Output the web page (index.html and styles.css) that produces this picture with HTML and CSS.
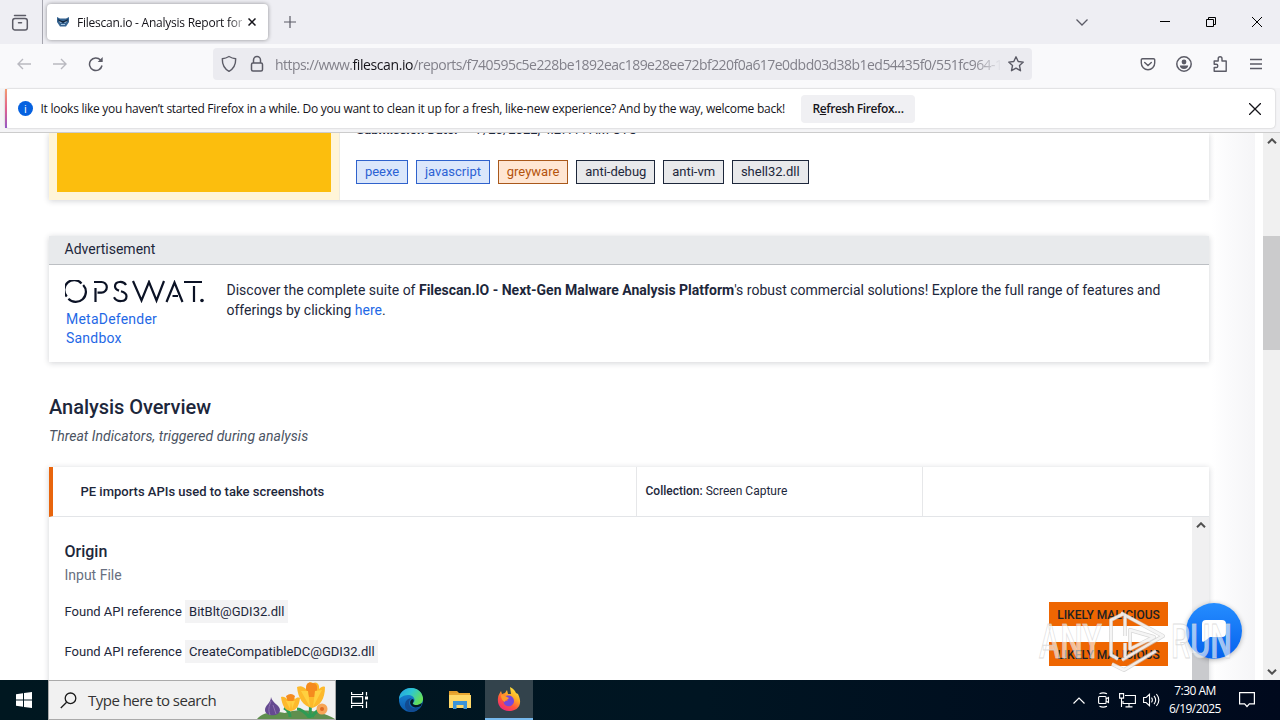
FILE: index.html
```html
<!DOCTYPE html>
<html lang="en">
<head>
<meta charset="utf-8">
<title>Filescan.io - Analysis Report</title>
<link rel="stylesheet" href="styles.css">
</head>
<body>
<div class="screen">
  <header class="tabs">
    <div class="view"><svg width="18" height="18" viewBox="0 0 18 18" fill="none" stroke="#5b5b66" stroke-width="1.500" stroke-linecap="round"><path d="M3.500 1.600h11"/><rect x="1.700" y="4.500" width="14.600" height="11.500" rx="2.300"/><path d="M7.500 8.800h3"/></svg></div>
    <div class="tab">
      <svg width="12" height="10" viewBox="0 0 12 10"><path d="M0 0l3 1.500h6L12 0v5L9 9.500H3L0 5z" fill="#356391"/><path d="M1 2l4 2h2l4-2-1 3H7L6 6.500 5 5H2z" fill="#10263f"/><path d="M2 4l3 1.500H3zm8 0L7 5.500h2z" fill="#dce9f5"/><path d="M4 7.500h4" stroke="#a5c4df"/></svg>
      <span class="tab-title">Filescan.io - Analysis Report for</span>
      <svg class="tab-x" width="8" height="8" viewBox="0 0 8 8" stroke="#15141a" stroke-width="1.500"><path d="M.5.5l7 7m0-7l-7 7"/></svg>
    </div>
    <svg class="plus" width="12" height="12" viewBox="0 0 12 12" stroke="#5b5b66" stroke-width="1.200"><path d="M6 0v12M0 6h12"/></svg>
    <svg class="all-tabs" width="12" height="7" viewBox="0 0 12 7" fill="none" stroke="#5b5b66" stroke-width="1.300"><path d="M.5.5L6 6 11.500.5"/></svg>
    <div class="win">
      <svg width="10" height="10" viewBox="0 0 10 10" stroke="#000"><path d="M0 4.500h10"/></svg>
      <svg width="10" height="10" viewBox="0 0 10 10" stroke="#000" fill="none"><path d="M.5 2.500h7v7h-7zM2.500 2.500v-2h7v7h-2"/></svg>
      <svg width="10" height="10" viewBox="0 0 10 10" stroke="#000" fill="none"><path d="M0 0l10 10M10 0L0 10"/></svg>
    </div>
  </header>

  <div class="toolbar">
    <div class="nav">
      <svg width="14" height="12" viewBox="0 0 14 12" fill="none" stroke="#b9b9c0" stroke-width="1.400"><path d="M14 6H1M6 1L1 6l5 5"/></svg>
      <svg width="14" height="12" viewBox="0 0 14 12" fill="none" stroke="#b9b9c0" stroke-width="1.400"><path d="M0 6h13M8 1l5 5-5 5"/></svg>
      <svg width="16" height="16" viewBox="0 0 16 16" fill="none" stroke="#5b5b66" stroke-width="1.500"><path d="M14 9.500A6.300 6.300 0 1 1 12.500 4"/><path d="M14.700 1v5h-5z" fill="#5b5b66" stroke="none"/></svg>
    </div>
    <div class="urlbar">
      <svg width="16" height="18" viewBox="0 0 16 18" fill="none" stroke="#5b5b66" stroke-width="1.400" stroke-linejoin="round"><path d="M8 1.500C6 2.700 3.700 3.500 1.300 3.700 1.200 9 3 13.500 8 16.300c5-2.800 6.800-7.300 6.700-12.600C12.300 3.500 10 2.700 8 1.500z"/></svg>
      <svg width="14" height="18" viewBox="0 0 14 18" fill="none" stroke="#5b5b66" stroke-width="1.500"><rect x="1.500" y="8" width="11" height="8" rx="1.500"/><path d="M3.500 8V5a3.500 3.500 0 0 1 7 0v3"/></svg>
      <div class="url">https://www.<b>filescan.io</b>/reports/f740595c5e228be1892eac189e28ee72bf220f0a617e0dbd03d38b1ed54435f0/551fc964-1</div>
      <svg width="18" height="18" viewBox="0 0 18 18" fill="none" stroke="#5b5b66" stroke-width="1.400" stroke-linejoin="round"><path d="M9 1.800l2.200 4.700 5.100.6-3.800 3.500 1 5.100L9 13.200l-4.500 2.500 1-5.100L1.700 7.100l5.100-.6z"/></svg>
    </div>
    <div class="tools">
      <svg width="16" height="16" viewBox="0 0 16 16" fill="none" stroke="#5b5b66" stroke-width="1.400" stroke-linecap="round"><path d="M2.500 2.700h11a1.200 1.200 0 0 1 1.200 1.200V7a6.700 6.700 0 0 1-13.400 0V3.900a1.200 1.200 0 0 1 1.200-1.200z"/><path d="M4.700 6.500L8 9.500l3.300-3"/></svg>
      <svg width="16" height="16" viewBox="0 0 16 16"><circle cx="8" cy="8" r="7.200" fill="none" stroke="#5b5b66" stroke-width="1.500"/><circle cx="8" cy="6" r="2.400" fill="#5b5b66"/><path d="M3.800 9.500h8.400c0 2-1.700 3.400-4.200 3.400s-4.200-1.400-4.200-3.400z" fill="#5b5b66"/></svg>
      <svg width="16" height="16" viewBox="0 0 16 16" fill="none" stroke="#5b5b66" stroke-width="1.400" stroke-linejoin="round"><path d="M2.200 15.300v-3.800h2a1.600 1.600 0 0 0 0-3.200h-2V5h4V2.700a1.900 1.900 0 0 1 3.800 0V5h4.200v10.300z"/></svg>
      <svg width="12" height="12" viewBox="0 0 12 12" stroke="#5b5b66" stroke-width="1.300"><path d="M0 1.500h12M0 6h12M0 10.500h12"/></svg>
    </div>
  </div>

  <div class="notice-wrap">
    <div class="notice">
      <span class="info">i</span>
      <span class="notice-text">It looks like you haven’t started Firefox in a while. Do you want to clean it up for a fresh, like-new experience? And by the way, welcome back!</span>
      <button class="refresh">R<u>e</u>fresh Firefox…</button>
      <svg class="notice-x" width="12" height="12" viewBox="0 0 12 12" stroke="#15141a" stroke-width="1.300"><path d="M0 0l12 12M12 0L0 12"/></svg>
    </div>
  </div>

  <div class="viewport">
    <div class="edge"></div>
    <main class="page">
      <section class="card summary">
        <div class="verdict"><div class="verdict-fill"></div></div>
        <div class="details">
          <div class="date"><b>Submission Date:</b><span>7/20/2022, 4:27:44 AM UTC</span></div>
          <div class="tags">
            <span class="tag blue">peexe</span><span class="tag blue">javascript</span><span class="tag orange">greyware</span><span class="tag">anti-debug</span><span class="tag">anti-vm</span><span class="tag">shell32.dll</span>
          </div>
        </div>
      </section>

      <section class="card ad">
        <div class="ad-head">Advertisement</div>
        <div class="ad-body">
          <div class="brand">
            <svg width="140" height="24" viewBox="0 0 140 24" fill="none" stroke="#0b1225" stroke-width="2.200"><path d="M1.800 16.500A9.700 9.700 0 0 1 16.500 3.400M18.200 4.900A9.700 9.700 0 0 1 3.400 18.700"/><path d="M30.500 22V8M29 2h7.500a5.300 5.300 0 0 1 0 10.600h-4"/><path d="M61 5c-2.500-4.500-11-4-11 1.300 0 2.300 1.500 3.500 4 4.300M56 11.200c3.500 1 5.500 2.500 5.500 5 0 6-9.500 6.500-12.500 1"/><path d="M68 1l8.500 19.500L84 2l7.500 18.500L99 1"/><path d="M101.500 22l8-19.500 8 19.500M107.500 16h5.500"/><path d="M119 2h18M129 6v16"/><circle cx="137" cy="20.500" r="1.800" fill="#0b1225" stroke="none"/></svg>
            <a class="product">MetaDefender<br>Sandbox</a>
          </div>
          <p class="ad-text">Discover the complete suite of <b>Filescan.IO - Next-Gen Malware Analysis Platform</b>'s robust commercial solutions! Explore the full range of features and<br>offerings by clicking <a>here</a>.</p>
        </div>
      </section>

      <h2>Analysis Overview</h2>
      <p class="subtitle">Threat Indicators, triggered during analysis</p>

      <section class="card indicator">
        <div class="ind-row">
          <div class="ind-name">PE imports APIs used to take screenshots</div>
          <div class="ind-col"><b>Collection:</b> Screen Capture</div>
          <div class="ind-empty"></div>
        </div>
        <div class="ind-body">
          <div class="ind-content">
            <h3>Origin</h3>
            <p class="source">Input File</p>
            <div class="finding"><span>Found API reference <code>BitBlt@GDI32.dll</code></span><strong>LIKELY MALICIOUS</strong></div>
            <div class="finding"><span>Found API reference <code>CreateCompatibleDC@GDI32.dll</code></span><strong>LIKELY MALICIOUS</strong></div>
          </div>
          <div class="inner-scroll">
            <svg width="10" height="6" viewBox="0 0 10 6" fill="none" stroke="#505050" stroke-width="2"><path d="M1 5.300l4-4 4 4"/></svg>
            <div class="inner-thumb"></div>
          </div>
        </div>
      </section>
    </main>
    <div class="scrollbar">
      <svg width="10" height="6" viewBox="0 0 10 6" fill="none" stroke="#505050" stroke-width="2"><path d="M1 5.300l4-4 4 4"/></svg>
      <div class="thumb"></div>
      <svg class="down" width="10" height="6" viewBox="0 0 10 6" fill="none" stroke="#505050" stroke-width="2"><path d="M1 .7l4 4 4-4"/></svg>
    </div>
    <div class="chat"><svg width="24" height="24" viewBox="0 0 24 24" fill="#fff"><path d="M4 1h16a4 4 0 0 1 4 4v9a4 4 0 0 1-4 4H8l-6 4.500c-1 .7-2 .3-2-1V5a4 4 0 0 1 4-4z"/></svg></div>
    <svg class="watermark" width="200" height="70" viewBox="0 0 200 70">
      <g fill="#fff" fill-opacity=".62" stroke="#cfcfcf" stroke-opacity=".7" stroke-width=".9" font-family="Roboto, sans-serif" font-size="49" font-weight="500">
        <text x="2" y="49" textLength="63" lengthAdjust="spacingAndGlyphs">ANY</text>
        <text x="134" y="49" textLength="61" lengthAdjust="spacingAndGlyphs">RUN</text>
      </g>
      <g fill="none" stroke-linejoin="round">
        <path d="M86 5l-12 6v35l7 4M88 7v20M88 34v14M84 4l42 23-41 24M93 21v19l24-12zM75 55l12 6 32-19" stroke="#c8c8c8" stroke-opacity=".7" stroke-width="4"/>
        <path d="M86 5l-12 6v35l7 4M88 7v20M88 34v14M84 4l42 23-41 24M93 21v19l24-12zM75 55l12 6 32-19" stroke="#fff" stroke-opacity=".75" stroke-width="2.600"/>
      </g>
    </svg>
  </div>

  <footer class="taskbar">
    <div class="start"><svg width="16" height="16" viewBox="0 0 16 16" fill="#fff"><path d="M0 2.200L7 1.200v6.300H0zM8 1.100L16 0v7.500H8zM0 8.500h7v6.300L0 13.800zM8 8.500h8V16l-8-1.100z"/></svg></div>
    <div class="search">
      <svg width="17" height="17" viewBox="0 0 17 17" fill="none" stroke="#1b1b1b" stroke-width="1.300"><circle cx="10.500" cy="6.300" r="5.300"/><path d="M6.600 10.200L.8 16"/></svg>
      <span>Type here to search</span>
      <svg class="flowers" width="78" height="38" viewBox="0 0 78 38">
        <path d="M0 38c6-7 18-8 28-6 12-5 36-3 50 6z" fill="#5f8f4e"/>
        <path d="M33 36c0-5-2-7-6-9M53 37c0-7 1-9 0-14M52 36c-5-6-8-8-12-8M55 36c3-6 8-8 13-9" stroke="#2e9b54" stroke-width="3" fill="none"/>
        <path d="M14 16c1 6 9 8 9 13 0 7-15 7-15 0 0-5 6-7 6-13z" fill="#654a91"/><path d="M14 20c-2 5-3 9-1 14M16 24l3 9" stroke="#9173b2" fill="none"/>
        <path d="M24 16c3-1 5 1 6 2 2-4 6-4 8 0 1-1 3-2 5-1-1 8-3 12-9 13-6 0-9-6-10-14z" fill="#fdb92b"/><path d="M29 15q5-4 9 0l-2 6h-5z" fill="#f58a1e"/><path d="M29 20l4 8 1-8 1 8 3-8" fill="#ffd040"/>
        <path d="M40 6c4-2 7 0 9 2 0-6 4-8 7-6 4-2 7 2 6 6 2-2 4-3 6-2 0 12-5 19-13 21-9-2-14-10-15-21z" fill="#fdb92b"/><path d="M49 8q0-8 6-6 6-1 5 7l-2 7h-6z" fill="#f58a1e"/><path d="M44 10l9 16-2-16zM65 9l-9 17 2-16z" fill="#ffd040"/>
        <circle cx="65" cy="28" r="5.500" fill="#f6a557"/><circle cx="65" cy="28" r="2" fill="#df6a22"/>
      </svg>
    </div>
    <div class="app"><svg width="18" height="16" viewBox="0 0 18 16" fill="none" stroke="#fff" stroke-width="1.200"><path d="M.6 0v2.500h11V0M.6 16v-2.500h11V16M.6 4.600h11v6.800H.6zM15.500 0v3.500M15.500 9.500V16"/><path d="M14 4.500h3v3h-3z" fill="#fff" stroke="none"/></svg></div>
    <div class="app wide"><svg width="24" height="24" viewBox="0 0 24 24"><defs><linearGradient id="eg" x1="0" y1="0" x2="1" y2=".5"><stop offset="0" stop-color="#249de2"/><stop offset=".5" stop-color="#2dc6d2"/><stop offset="1" stop-color="#65df58"/></linearGradient><linearGradient id="eb" x1="0" y1="0" x2="0" y2="1"><stop offset="0" stop-color="#1b8edc"/><stop offset="1" stop-color="#0b58ac"/></linearGradient></defs><circle cx="12" cy="12" r="12" fill="url(#eb)"/><path d="M0 11C1-3 22-4 24 10c.4 5-3 7-7 7-3 0-4-1-2-3 2-4-2-7-6-7-5 0-8 3-9 4z" fill="url(#eg)"/><path d="M13 10c-3 1-5 8 1 10 4 1 6-1 8-2-2 3-6 6-10 6-6-1-8-8-4-12 1-1 3-2 5-2z" fill="#124b91"/><path d="M14 11c2 2-1 4 0 5 2 2 6 1 9-1l-1 3c-4 2-8 2-10-1-2-3 0-6 2-6z" fill="#051a24"/></svg></div>
    <div class="app folder"><svg width="22" height="18" viewBox="0 0 22 18"><path d="M0 0h8l2 2h11v15H0z" fill="#e9a832"/><path d="M0 4h22v13H0z" fill="#ffd868"/><path d="M4 10h14v8h-3.500v-4h-7v4H4z" fill="#3b94d8"/><path d="M0 1h8" stroke="#d98e20"/></svg></div>
    <div class="app active"><svg width="24" height="24" viewBox="0 0 24 24"><defs><linearGradient id="fx" x1=".8" y1="0" x2=".2" y2="1"><stop offset="0" stop-color="#fff044"/><stop offset=".35" stop-color="#ffae24"/><stop offset=".65" stop-color="#ff563b"/><stop offset="1" stop-color="#ef2183"/></linearGradient></defs><path d="M4 4l1 3 3-1 2-3 1 4 3 0-1-7c4 2 5 4 6 6l2 1c6 12-2 17-9 17C4 24 0 18 1 11c0-3 2-5 3-7z" fill="url(#fx)"/><path d="M8 10c3-3 9-1 9 4 0 4-4 6-7 5-3-1-4-4-3-6 1 2 3 1 4 0z" fill="#7548db"/><path d="M4 8c4 0 5 2 8 3-1 2-4 1-4 4-3-1-4-4-4-7z" fill="#ff9b2c"/></svg></div>
    <div class="tray">
      <svg width="12" height="7" viewBox="0 0 12 7" fill="none" stroke="#fff" stroke-width="1.200"><path d="M.5 6.500L6 1l5.500 5.500"/></svg>
      <svg class="cam" width="12" height="16" viewBox="0 0 12 16" fill="none" stroke="#fff" stroke-width="1.100"><rect x=".6" y="4.500" width="7.500" height="7" rx="1"/><path d="M8 7l2.500-1.500v5L8 9M1.500 1.700Q5 0 9 1.700M1.500 14.300Q5 16 9 14.300"/></svg>
      <svg class="net" width="17" height="15" viewBox="0 0 17 15" fill="none" stroke="#fff" stroke-width="1.100"><path d="M6 2.500h10.400v8H4V8M10 10.500v3M6.500 13.900h7M.6.600h4v4.500h-4zM2.500 5v9"/></svg>
      <svg class="vol" width="17" height="14" viewBox="0 0 17 14" fill="none" stroke="#fff" stroke-width="1.100"><path d="M.6 4.500h2.500L6.500 1.300v11.400L3.100 9.500H.6zM8.500 4.700q1.700 2.300 0 4.600M11 2.800q3.300 4.200 0 8.400M13.400 1q4.900 6 0 12"/></svg>
      <div class="clock"><span class="time">7:30 AM</span><span class="day">6/19/2025</span></div>
      <svg class="note" width="16" height="16" viewBox="0 0 16 16" fill="none" stroke="#fff" stroke-width="1.200"><path d="M.6.600h14.800v11.300h-5L8 14.500l-2.400-2.600h-5z"/></svg>
    </div>
  </footer>
</div>
</body>
</html>
```
FILE: styles.css
```css
* { box-sizing: border-box; }
body { margin: 0; }
.screen { width: 1280px; height: 720px; overflow: hidden; display: flex; flex-direction: column; font-family: "Open Sans", "Noto Sans", sans-serif; color: #15141a; white-space: nowrap; }
svg { display: block; flex: none; }
p, h2, h3 { margin: 0; }

.tabs { height: 44px; background: #eeeef3; display: flex; align-items: center; flex: none; }
.view { width: 43px; height: 44px; border-right: 1px solid #a5a5ae; padding: 14px 0 0 11px; }
.tab { margin-left: 4px; width: 221px; height: 36px; background: #fff; border-radius: 4px; box-shadow: 0 0 4px rgba(0,0,0,.4); display: flex; align-items: center; padding-left: 10px; }
.tab-title { width: 165px; margin-left: 8px; overflow: hidden; font-size: 12px; letter-spacing: -.24px; padding-top: 1px; -webkit-mask-image: linear-gradient(90deg, #000 92%, transparent 104%); mask-image: linear-gradient(90deg, #000 92%, transparent 104%); }
.tab-x { margin-left: 6px; }
.plus { margin-left: 16px; }
.all-tabs { margin-left: auto; }
.win { display: flex; gap: 36px; margin: 0 18px 0 72px; }

.toolbar { height: 44px; flex: none; background: #f9f9fb; display: flex; align-items: center; }
.nav { width: 213px; display: flex; align-items: center; gap: 22px; padding: 0 0 4px 17px; }
.nav svg:last-child { margin-left: -1px; }
.urlbar { width: 819px; height: 32px; margin-top: -4px; border-radius: 4px; background: #ebebf0; display: flex; align-items: center; padding-left: 8px; }
.urlbar svg + svg { margin-left: 13px; }
.url { margin: 0 5px 0 11px; width: 727px; overflow: hidden; font-size: 14px; letter-spacing: -.54px; padding-top: 1px; color: #82818a; -webkit-mask-image: linear-gradient(90deg, #000 96%, transparent); mask-image: linear-gradient(90deg, #000 96%, transparent); }
.url b { color: #15141a; font-weight: 400; letter-spacing: -.4px; }
.tools { display: flex; align-items: center; gap: 20px; margin-left: 108px; padding-bottom: 4px; }
.tools svg:last-child { margin-left: 2px; }

.notice-wrap { height: 45px; flex: none; background: #f4f4f6; padding: 1px 5px 0 5px; border-bottom: 1px solid #ccc; }
.notice { height: 39px; background: #fff; border-radius: 4px; border-left: 2px solid; border-image: linear-gradient(#f3a070, #e2618e, #9059c8) 1; box-shadow: 0 0 2px rgba(0,0,0,.25); display: flex; align-items: center; padding-left: 11px; }
.info { width: 15px; height: 15px; border-radius: 50%; background: #0561e0; color: #fff; font-size: 11px; line-height: 15px; text-align: center; }
.notice-text { width: 745px; margin-left: 7.500px; font-size: 12px; letter-spacing: -.266px; }
.refresh { width: 114px; height: 28px; margin-left: 15.500px; padding: 0; border: 0; border-radius: 4px; background: #f0f0f3; font: 600 12px "Open Sans", sans-serif; letter-spacing: -.4px; color: #15141a; }
.notice-x { margin: 0 14px 0 auto; }

.viewport { height: 547px; flex: none; position: relative; display: flex; overflow: hidden; background: #fff; font-family: Roboto, sans-serif; color: #1d273b; }
.page { width: 1255px; flex: none; padding-left: 49px; position: relative; }
.card { background: #fff; box-shadow: 0 1px 6px rgba(30,35,50,.2); width: 1160px; }
.summary { height: 67px; display: flex; }
.verdict { width: 291px; padding: 0 8px 8px; background: #fff5d8; border-right: 1px solid #eeeade; }
.verdict-fill { height: 59px; background: #fcbe0d; }
.details { padding-left: 16px; }
.date { margin-top: -11px; height: 38px; line-height: 15px; font-size: 13px; display: flex; gap: 18px; }
.date b { font-weight: 700; letter-spacing: -.05px; }
.tags { display: flex; gap: 8px; }
.tag { height: 24px; border: 1px solid #1d273b; background: #e8e9eb; padding: 0 7.900px; font-size: 13px; line-height: 22px; }
.tag.blue { border-color: #2f62cc; color: #2b62d4; background: #dbe7fb; }
.tag.orange { border-color: #a9581b; color: #b4530c; background: #ffe6d3; }

.ad { margin-top: 36px; height: 126px; }
.ad-head { height: 29px; background: #e8eaec; border-bottom: 1px solid #bcbfc3; padding-left: 15.500px; font-size: 14px; line-height: 27px; }
.ad-body { display: flex; padding: 15px 15.500px; }
.brand { width: 162px; }
.product { display: block; margin: 6px 0 0 1.500px; font-size: 14px; line-height: 19px; letter-spacing: .22px; color: #1f69e6; }
.ad-text { font-size: 14px; line-height: 20px; }
.ad-text a { color: #1f69e6; }

h2 { margin-top: 34px; font-size: 20px; font-weight: 500; line-height: 22px; letter-spacing: -.04px; }
.subtitle { margin-top: 9px; font-size: 14px; font-style: italic; line-height: 18px; letter-spacing: .04px; color: #4b5362; }
.indicator { margin-top: 22px; height: 300px; }
.ind-row { height: 50px; border-bottom: 1px solid #e3e5e8; border-left: 4px solid #e8650d; display: grid; grid-template-columns: 584px 286px 1fr; line-height: 49px; }
.ind-name { padding-left: 27.500px; border-right: 1px solid #e6e7e9; font-size: 13px; font-weight: 500; }
.ind-col { padding-left: 8.500px; border-right: 1px solid #e6e7e9; font-size: 12px; line-height: 48px; }
.ind-col b { font-weight: 500; }
.ind-body { display: flex; height: 249px; }
.ind-content { flex: 1; padding: 25px 24px 0 15.500px; }
h3 { font-size: 16px; font-weight: 500; line-height: 20px; }
.source { margin-top: 4px; font-size: 14px; line-height: 18px; color: #687080; }
.finding { display: flex; justify-content: space-between; font-size: 13px; line-height: 23px; margin-top: 16px; height: 24px; }
.finding > span { margin-top: -2px; }
.source + .finding { margin-top: 18px; }
.finding code { display: inline-block; height: 23px; background: #f3f3f4; padding: 0 3.500px 0 4.500px; margin-left: -.5px; font-family: Roboto, sans-serif; }
.finding strong { width: 119px; background: #ee6602; color: #202124; font-size: 12px; font-weight: 500; text-align: center; line-height: 26px; }
.inner-scroll { width: 17px; background: #f0f0f1; padding: 5px 0 0 3.500px; }
.inner-thumb { height: 100px; width: 17px; margin: 125px 0 0 -3.500px; background: #c9cacd; }

/* shading at the right-hand end of the page body */
.edge { position: absolute; left: 1209px; top: 0; width: 46px; height: 547px; background: linear-gradient(90deg, #fff 6%, #fbfbfc 40%, #f5f5f7); }
.scrollbar { margin-left: 8px; width: 17px; background: #f0f0f0; display: flex; flex-direction: column; padding: 5px 0 5px; align-items: center; }
.thumb { width: 17px; height: 114px; margin-top: 92px; background: #cbcbcc; }
.down { margin-top: auto; }
.chat { position: absolute; left: 1186px; top: 470px; width: 56px; height: 56px; border-radius: 50%; background: linear-gradient(#258dff, #0561ed); box-shadow: 0 1px 5px rgba(0,0,0,.3); display: flex; align-items: center; justify-content: center; }
.watermark { position: absolute; left: 1037px; top: 476px; }

.taskbar { height: 40px; flex: none; background: linear-gradient(90deg, #001720, #001522 55%, #00091d); display: flex; color: #fff; }
.start { width: 48px; padding: 12px 0 0 16px; }
.search { width: 288px; background: #f1f1f1; border: 1px solid #aaa; display: flex; align-items: center; padding-left: 11px; color: #333; font-size: 15px; letter-spacing: -.52px; }
.search span { margin-left: 11px; }
.flowers { margin-left: auto; }
.app { width: 48px; display: flex; align-items: center; justify-content: center; }
.app.wide { width: 53px; }
.folder { padding-right: 2px; }
.active { background: #33434c; border-bottom: 2px solid #76b9ed; }
.tray { margin-left: auto; display: flex; align-items: center; width: 207px; }
.cam { margin-left: 13px; }
.net { margin-left: 9px; }
.vol { margin-left: 7px; }
.clock { width: 54px; margin-left: 8px; display: flex; flex-direction: column; align-items: center; font-size: 12px; line-height: 18px; letter-spacing: -.55px; }
.note { margin-left: 17px; }
```
